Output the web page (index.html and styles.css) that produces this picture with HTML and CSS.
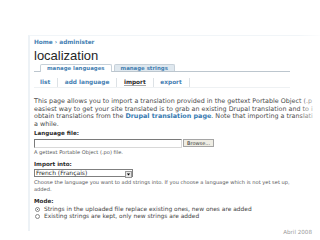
FILE: index.html
```html
<!DOCTYPE html>
<html>
<head>
<meta charset="utf-8">
<link rel="stylesheet" href="styles.css">
</head>
<body>
<div class="slide">
  <div class="panel">
    <div class="crumbs"><a href="#">Home</a> › <a href="#">administer</a></div>
    <h1>localization</h1>
    <ul class="tabs primary">
      <li class="active"><a href="#">manage languages</a></li>
      <li><a href="#">manage strings</a></li>
    </ul>
    <ul class="tabs secondary">
      <li><a href="#">list</a></li>
      <li><a href="#">add language</a></li>
      <li class="active"><a href="#">import</a></li>
      <li><a href="#">export</a></li>
    </ul>
    <p class="intro">This page allows you to import a translation provided in the gettext Portable Object (.p<br>easiest way to get your site translated is to grab an existing Drupal translation and to i<br>obtain translations from the <a href="#">Drupal translation page</a>. Note that importing a translati<br>a while.</p>
    <div class="item first">
      <div class="label">Language file:</div>
      <div class="file"><span class="textbox"></span><span class="button">Browse...</span></div>
      <div class="desc">A gettext Portable Object (.po) file.</div>
    </div>
    <div class="item">
      <div class="label">Import into:</div>
      <div class="select"><span class="value">French (Français)</span><span class="arrow"><svg width="5" height="5" viewBox="0 0 5 5"><path d="M0.8 1.6h3.4L2.5 3.6z" fill="#000"/></svg></span></div>
      <div class="desc">Choose the language you want to add strings into. If you choose a language which is not yet set up,<br>added.</div>
    </div>
    <div class="item">
      <div class="label">Mode:</div>
      <div class="radio first-radio"><span class="dot on"></span>Strings in the uploaded file replace existing ones, new ones are added</div>
      <div class="radio"><span class="dot"></span>Existing strings are kept, only new strings are added</div>
    </div>
  </div>
  <div class="date">Abril 2008</div>
  <div class="fade"></div>
</div>
</body>
</html>
```

FILE: styles.css
```css
html, body {
  margin: 0;
  padding: 0;
  background: #fff;
}
body {
  width: 320px;
  height: 240px;
  overflow: hidden;
  font-family: "DejaVu Sans", Verdana, sans-serif;
  color: #444;
}
.slide {
  position: relative;
  width: 320px;
  height: 240px;
  overflow: hidden;
}
.panel {
  margin: 35px 0 0 28px;
  padding: 2.5px 0 3px 4px;
  border-left: 2px solid #edf2f6;
  border-top: 1px solid #f1f5f8;
  height: 189px;
  white-space: nowrap;
  overflow: hidden;
}
a {
  color: #4580b2;
  text-decoration: none;
}
.crumbs {
  font-size: 5.8px;
  line-height: 7px;
  font-weight: bold;
  color: #5089b6;
}
h1 {
  margin: 3.5px 0 0;
  font-family: "Liberation Sans", Arial, sans-serif;
  font-weight: normal;
  font-size: 13px;
  line-height: 14px;
  color: #262626;
}
.tabs {
  list-style: none;
  margin: 0;
  padding: 0;
  display: flex;
}
.primary {
  margin-top: 1px;
  width: 250px;
  padding-left: 6px;
  border-bottom: 1px solid #bcc6ce;
  gap: 2px;
  height: 7px;
}
.primary li a {
  display: block;
  font-size: 5.4px;
  line-height: 6px;
  font-weight: bold;
  padding: 0 6px;
  border: 1px solid #c6d0d8;
  border-bottom: none;
  border-radius: 2px 2px 0 0;
  background: #dfe8ef;
}
.primary li.active a {
  background: #fff;
  height: 7px;
}
.secondary {
  margin-top: 6px;
  padding: 0 0 0 6px;
  width: 250px;
  height: 9px;
  border-bottom: 1px solid #eef1f3;
  align-items: center;
}
.secondary li {
  border-right: 1px solid #dde2e6;
  padding: 0 6.8px;
  font-size: 5.8px;
  line-height: 9px;
  font-weight: bold;
}
.secondary li:first-child { padding-left: 0; }
.secondary li.active a {
  color: #2a2a2a;
  border-bottom: 1px solid #aaa;
}
.intro {
  margin: 10px 0 0;
  font-size: 6.4px;
  line-height: 7.6px;
  color: #4a4a4a;
}
.intro a { font-weight: bold; color: #3579b0; }
.item {
  margin-top: 5.5px;
}
.item.first {
  margin-top: 1.9px;
}
.label {
  font-size: 5.6px;
  line-height: 7px;
  font-weight: bold;
  color: #2a2a2a;
}
.file {
  display: flex;
  align-items: flex-start;
  margin-top: 1.5px;
}
.textbox {
  width: 146px;
  height: 7px;
  border: 1px solid #7a7a7a;
  border-right-color: #d8d8d8;
  border-bottom-color: #d8d8d8;
  background: #fff;
}
.button {
  margin-left: 1px;
  height: 6px;
  padding: 0 3px;
  font-size: 5px;
  line-height: 6px;
  color: #333;
  background: #efede4;
  border: 1px solid #a5a5a5;
}
.desc {
  margin-top: 1px;
  font-size: 5.1px;
  line-height: 6.6px;
  color: #555;
}
.select {
  display: flex;
  width: 97px;
  height: 6px;
  margin-top: 1.5px;
  margin-bottom: 1.7px;
  border: 1px solid #7f7f7f;
  background: #fff;
}
.select .value {
  flex: 1;
  font-size: 6px;
  line-height: 6px;
  padding-left: 1px;
  color: #2a2a2a;
}
.select .arrow {
  width: 5px;
  height: 5px;
  margin: 0.5px;
  border: 0.5px solid #999;
  background: #e6e6e6;
  display: flex;
  align-items: center;
  justify-content: center;
}
.radio {
  display: flex;
  align-items: center;
  font-size: 5.9px;
  line-height: 7px;
  color: #444;
}
.first-radio {
  margin-top: 1px;
}
.dot {
  width: 3px;
  height: 3px;
  border: 0.7px solid #888;
  border-radius: 50%;
  margin: 0 4px 0 1px;
  background: #fff;
  position: relative;
}
.dot.on::after {
  content: "";
  position: absolute;
  left: 0.9px;
  top: 0.9px;
  width: 1.2px;
  height: 1.2px;
  border-radius: 50%;
  background: #333;
}
.date {
  text-align: right;
  padding-right: 8px;
  margin-top: -2px;
  font-size: 5.6px;
  line-height: 7px;
  color: #9a9a9a;
}
.fade {
  position: absolute;
  top: 0;
  right: 0;
  width: 22px;
  height: 200px;
  background: linear-gradient(to right, rgba(255,255,255,0), rgba(255,255,255,0.85));
}
```
